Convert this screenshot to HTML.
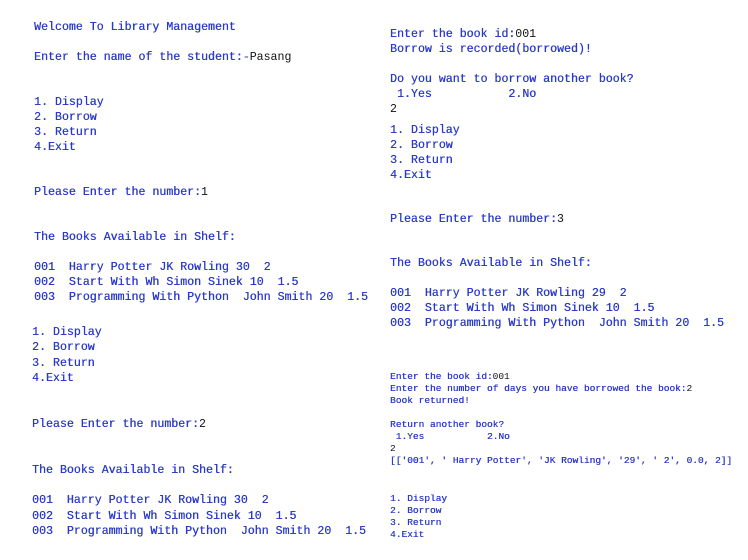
<!DOCTYPE html>
<html><head><meta charset="utf-8"><style>
body{margin:0;width:748px;height:560px;background:#fff;overflow:hidden;position:relative;font-family:"Liberation Mono",monospace;color:#2a3ac8}
.l{position:absolute;white-space:pre;font-size:11.6px;line-height:15px;text-shadow:0.3px 0 0 #2a3ac8}
.s{position:absolute;white-space:pre;font-size:9.5px;line-height:12px;text-shadow:0.3px 0 0 #2a3ac8}
b{font-weight:normal;color:#111;text-shadow:none}
</style></head><body>
<div class="l" style="left:34px;top:20px">Welcome To Library Management</div>
<div class="l" style="left:34px;top:50px">Enter the name of the student:-<b>Pasang</b></div>
<div class="l" style="left:34px;top:95px">1. Display
2. Borrow
3. Return
4.Exit</div>
<div class="l" style="left:34px;top:185px">Please Enter the number:<b>1</b></div>
<div class="l" style="left:34px;top:230px">The Books Available in Shelf:</div>
<div class="l" style="left:34px;top:260px">001  Harry Potter JK Rowling 30  2
002  Start With Wh Simon Sinek 10  1.5
003  Programming With Python  John Smith 20  1.5</div>
<div class="l" style="left:32px;top:325px;line-height:15.3px">1. Display
2. Borrow
3. Return
4.Exit</div>
<div class="l" style="left:32px;top:417px">Please Enter the number:<b>2</b></div>
<div class="l" style="left:32px;top:463px">The Books Available in Shelf:</div>
<div class="l" style="left:32px;top:493px;line-height:15.5px">001  Harry Potter JK Rowling 30  2
002  Start With Wh Simon Sinek 10  1.5
003  Programming With Python  John Smith 20  1.5</div>

<div class="l" style="left:390px;top:27px">Enter the book id:<b>001</b>
Borrow is recorded(borrowed)!</div>
<div class="l" style="left:390px;top:72px">Do you want to borrow another book?
 1.Yes           2.No
<b>2</b></div>
<div class="l" style="left:390px;top:123px">1. Display
2. Borrow
3. Return
4.Exit</div>
<div class="l" style="left:390px;top:212px">Please Enter the number:<b>3</b></div>
<div class="l" style="left:390px;top:256px">The Books Available in Shelf:</div>
<div class="l" style="left:390px;top:286px">001  Harry Potter JK Rowling 29  2
002  Start With Wh Simon Sinek 10  1.5
003  Programming With Python  John Smith 20  1.5</div>

<div class="s" style="left:390px;top:371px">Enter the book id:<b>001</b>
Enter the number of days you have borrowed the book:<b>2</b>
Book returned!</div>
<div class="s" style="left:390px;top:419px">Return another book?
 1.Yes           2.No
<b>2</b>
[['001', ' Harry Potter', 'JK Rowling', '29', ' 2', 0.0, 2]]</div>
<div class="s" style="left:390px;top:493px">1. Display
2. Borrow
3. Return
4.Exit</div>
</body></html>
